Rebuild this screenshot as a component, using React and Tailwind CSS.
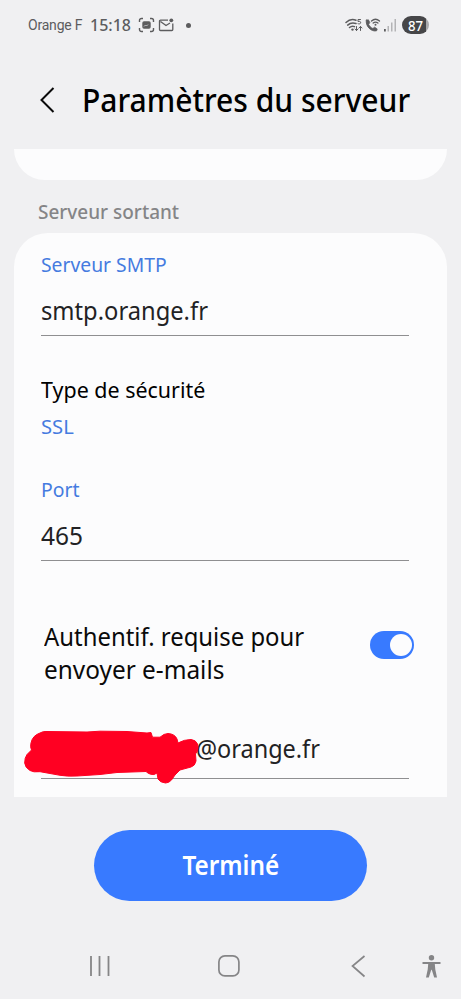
import React, { useState } from 'react';

const Text = ({ children, className }) => (
  <span className={`block w-max whitespace-nowrap origin-left ${className}`}>{children}</span>
);

const StatusBar = () => (
  <div className="flex h-[50px] items-center pl-7 pr-8 text-[#5c5c5e]">
    <div className="w-[62px]">
      <Text className="font-['Roboto'] text-[14px] leading-5 tracking-[-0.2px]">Orange F</Text>
    </div>
    <div className="w-[48px]">
      <Text className="text-[17px] font-medium leading-5 scale-x-[0.94]">15:18</Text>
    </div>
    <svg className="shrink-0" width="17" height="16" viewBox="0 0 17 16" fill="none" stroke="currentColor" strokeWidth="1.4">
      <path d="M1.5 5V3.500a2 2 0 0 1 2-2H5M12 1.500h1.500a2 2 0 0 1 2 2V5M15.500 11v1.500a2 2 0 0 1-2 2H12M5 14.500H3.500a2 2 0 0 1-2-2V11" />
      <rect x="5" y="5" width="7" height="6" rx="1" fill="currentColor" />
      <path d="M6 9.500l1.500-1.500 1 1 1.500-1.500" stroke="#d8d8da" strokeWidth="0.8" />
    </svg>
    <svg className="ml-[3px] shrink-0" width="17" height="16" viewBox="0 0 17 16" fill="none" stroke="currentColor" strokeWidth="1.3">
      <path d="M10 3.200H2.500a1 1 0 0 0-1 1v8.300a1 1 0 0 0 1 1h11.300a1 1 0 0 0 1-1V6.500M2.500 4.500l5.500 4 4-2.500" />
      <circle cx="13.300" cy="3.300" r="1.900" fill="currentColor" stroke="none" />
    </svg>
    <span className="ml-[11px] size-[5px] shrink-0 rounded-full bg-[#5c5c5e]" />
    <svg className="ml-auto shrink-0" width="18" height="16" viewBox="0 0 18 16" fill="none" stroke="currentColor" strokeWidth="1.500" strokeLinecap="round">
      <path d="M1 5.500C4 2.600 8 2 11 3.300M2.700 8.100C5 6 8 5.600 11 6.500M4.500 10.500C6 9.200 8 8.900 9.500 9.600" />
      <circle cx="7.500" cy="12.600" r="1.200" fill="currentColor" stroke="none" />
      <path d="M15.500 2.500h-2.500v2c2-.6 3 .2 2.600 1.500-.3 1-1.700 1.200-2.600.7" strokeWidth="1" />
      <path d="M11.500 9.500v4M10 12l1.500 1.600L13 12M15.500 13.500v-4M14 11l1.500-1.600L17 11" strokeWidth="1" />
    </svg>
    <svg className="ml-[2px] shrink-0" width="16" height="16" viewBox="0 0 16 16" fill="none" stroke="currentColor" strokeLinecap="round">
      <path d="M1.300 3.200 3.400 2.800 4.800 5.600 3.600 7.300c.9 2 2.200 3.300 4.300 4.200l1.700-1.300 2.600 1.700-.6 1.900c-5.500 1.400-11.500-5-10.300-10.600z" fill="currentColor" strokeWidth=".8" />
      <path d="M6.500 4c2.500-2.200 5.500-2.200 8 0M8.200 6c1.500-1.200 3.200-1.200 4.700 0" strokeWidth="1.300" />
      <circle cx="10.500" cy="7.800" r="1" fill="currentColor" stroke="none" />
    </svg>
    <svg className="ml-[3px] shrink-0" width="13" height="14" viewBox="0 0 13 14">
      <path d="M0 11h1.800v2.500H0z" fill="#5c5c5e" />
      <path d="M3.500 8h1.500v5.500H3.500zM7 4.500h1.500v9H7zM10.500 1H12v12.500h-1.500z" fill="#b4b4b6" />
    </svg>
    <div className="ml-[5px] flex h-[18px] w-[27px] shrink-0 items-center justify-center rounded-full bg-linear-to-r from-[#464648] from-88% to-[#a9a9ab] to-88%">
      <span className="text-[15px] font-medium leading-none text-white scale-x-[0.88]">87</span>
    </div>
  </div>
);

const Header = () => (
  <div className="flex h-[99px] items-center pl-10">
    <svg className="shrink-0" width="15" height="26" viewBox="0 0 15 26" fill="none" stroke="#0a0a0a" strokeWidth="2">
      <path d="M13.500 1 1.500 13l12 12" />
    </svg>
    <h1 className="ml-[27px]">
      <Text className="text-[33px] font-medium text-black scale-x-[0.91]">Paramètres du serveur</Text>
    </h1>
  </div>
);

const Toggle = ({ on, onClick }) => (
  <button
    type="button"
    onClick={onClick}
    className={`flex h-7 w-11 items-center rounded-full px-[2px] ${on ? 'justify-end bg-[#387aff]' : 'justify-start bg-gray-400'}`}
  >
    <span className="size-[22px] rounded-full bg-[#fcfcfd]" />
  </button>
);

const Scribble = () => (
  <svg className="absolute -left-[17px] top-0 overflow-visible" width="176" height="56" viewBox="0 0 176 56">
    <path
      d="M16 3Q19 1 23 1.500L63 2 76 1.200 103 1.500 123 3 127 2.500 128.500 7.200 136 7.200Q140 3.500 144 3.500 151 4 153 9L154 13Q160 9.500 167 9.500 172 10 173.500 14L174 18Q174 21 171.500 24L172 31Q171 36 167 37L156 40 151 45 147.500 50Q145 53 141.500 53 136 52.500 134 49L133 43Q130 45.500 126.500 44.200 124 43.500 122 41.500L93 42.500 76 44.500 53 46Q43 46.500 36 45.300L16 41.700Q9 42.500 6 40.500 1 37.500.7 33 .5 28 3 24.500L7.500 20Q6 17 7 13 8.500 5.500 16 3Z"
      fill="#ff0022"
      stroke="#ff0022"
      strokeLinejoin="round"
    />
  </svg>
);

const App = () => {
  const [auth, setAuth] = useState(true);

  return (
    <div className="flex h-[999px] w-[461px] flex-col overflow-hidden bg-[#f0f0f2] font-['Noto_Sans',sans-serif]">
      <StatusBar />
      <Header />

      <div className="mx-[14px] h-[31px] shrink-0 rounded-b-[32px] bg-[#fcfcfd]" />

      <div className="h-[53px] shrink-0 pl-[38px] pt-[9px]">
        <Text className="text-[20.500px] font-medium leading-[44px] text-[#858587] scale-x-[0.925]">Serveur sortant</Text>
      </div>

      <div className="mx-[14px] h-[564px] shrink-0 rounded-t-[34px] bg-[#fcfcfd] pl-[27px] pr-[38px] pt-5">
        <Text className="text-[20px] leading-6 text-[#457be0] scale-x-[0.965]">Serveur SMTP</Text>
        <div className="mt-[15px] border-b border-[#8f8f91] pb-[7px]">
          <Text className="text-[25.500px] leading-9 text-[#222224] scale-x-[0.93]">smtp.orange.fr</Text>
        </div>

        <div className="mt-[38px]">
          <Text className="text-[22px] leading-[30px] text-black scale-x-[0.975]">Type de sécurité</Text>
          <Text className="mt-[11px] text-[20px] leading-6 text-[#457be0] scale-x-[1.01]">SSL</Text>
        </div>

        <Text className="mt-[39px] text-[20px] leading-6 text-[#457be0] scale-x-[0.97]">Port</Text>
        <div className="mt-[15px] border-b border-[#8f8f91] pb-[7px]">
          <Text className="text-[25.500px] leading-9 text-[#222224] scale-x-[0.96]">465</Text>
        </div>

        <div className="-mr-[5px] ml-[3px] mt-[59px] flex items-start justify-between">
          <div className="text-[24.500px] leading-[33px] text-[#0a0a0a]">
            <Text className="scale-x-[0.975]">Authentif. requise pour</Text>
            <Text className="scale-x-[0.995]">envoyer e-mails</Text>
          </div>
          <div className="mt-[11px]">
            <Toggle on={auth} onClick={() => setAuth(!auth)} />
          </div>
        </div>

        <div className="relative mt-11 border-b border-[#8f8f91] pb-3 pl-[155px]">
          <Text className="text-[25.500px] leading-9 text-[#222224] scale-x-[0.92]">@orange.fr</Text>
          <Scribble />
        </div>
      </div>

      <button type="button" className="ml-[94px] mt-[33px] flex h-[71px] w-[273px] shrink-0 items-center justify-center rounded-full bg-[#387aff]">
        <span className="text-[27px] font-semibold text-white scale-x-[0.9]">Terminé</span>
      </button>

      <div className="mt-[53px] flex h-6 shrink-0 items-center text-[#858587]">
        <svg className="ml-[89px]" width="22" height="22" viewBox="0 0 22 22" stroke="currentColor" strokeWidth="1.800">
          <path d="M2 1v20M10.500 1v20M19.500 1v20" />
        </svg>
        <svg className="ml-[106px]" width="24" height="24" viewBox="0 0 24 24" fill="none" stroke="currentColor" strokeWidth="1.700">
          <rect x="1.900" y="1.900" width="20" height="20" rx="6" />
        </svg>
        <svg className="ml-[110px]" width="16" height="24" viewBox="0 0 16 24" fill="none" stroke="currentColor" strokeWidth="1.700">
          <path d="M13.500 2 1.500 12l12 10.500" />
        </svg>
        <svg className="ml-[55px]" width="20" height="24" viewBox="0 0 20 24" fill="currentColor">
          <circle cx="9.500" cy="3.700" r="2.700" />
          <path d="M.5 8h18v2h-5.700l.5 5.500 1.700 8h-2.800l-2.200-7-.5-1-.5 1-2.200 7H4l1.700-8 .5-5.500H.5z" />
        </svg>
      </div>
    </div>
  );
};

export default App;
